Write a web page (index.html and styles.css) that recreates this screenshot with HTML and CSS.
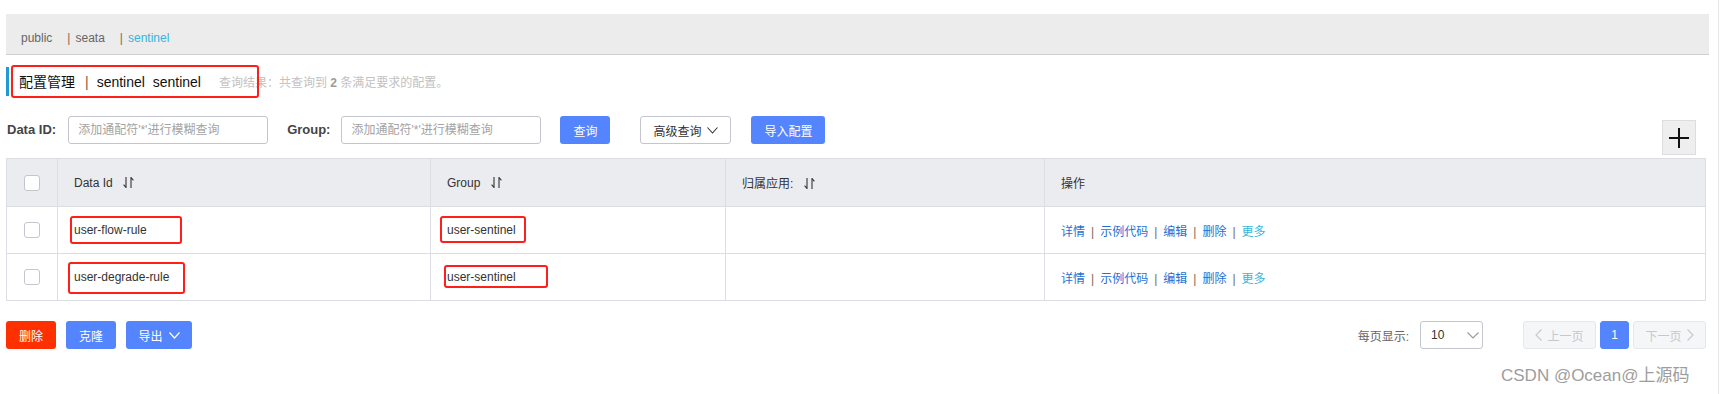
FILE: index.html
```html
<!DOCTYPE html>
<html>

<head>
  <title>配置管理</title>
  <link rel="stylesheet" href="styles.css">
</head>

<body>
  <div class="page">
    <!-- Namespace bar -->
    <div class="ns-bar">
      <span class="ns-item">public</span>
      <span class="ns-sep">|</span><span class="ns-item">seata</span>
      <span class="ns-sep">|</span><span class="ns-item ns-item--active">sentinel</span>
    </div>

    <!-- Page title -->
    <div class="title-row">
      <span class="title-text marked">配置管理<span class="title-sep">|</span>sentinel&nbsp;&nbsp;sentinel<i class="mark mark-title"></i></span>
      <span class="title-note">查询结果：共查询到 <b>2</b> 条满足要求的配置。</span>
    </div>

    <!-- Search row -->
    <div class="search-row">
      <label class="search-label">Data ID:</label>
      <input class="search-input" type="text" placeholder="添加通配符'*'进行模糊查询">
      <label class="search-label search-label--group">Group:</label>
      <input class="search-input" type="text" placeholder="添加通配符'*'进行模糊查询">
      <button class="btn btn-primary btn-query">查询</button>
      <button class="btn btn-normal btn-advanced">高级查询
        <svg class="chev" width="11" height="7" viewBox="0 0 11 7"><path d="M0.5 0.5L5.5 6L10.5 0.5" fill="none" stroke="#333" stroke-width="1.1"/></svg>
      </button>
      <button class="btn btn-primary btn-import">导入配置</button>
      <button class="btn-add">
        <svg width="20" height="20" viewBox="0 0 20 20"><path d="M0 10H20M10 0V20" stroke="#111" stroke-width="2"/></svg>
      </button>
    </div>

    <!-- Config table -->
    <table class="config-table">
      <colgroup>
        <col class="col-check">
        <col class="col-id">
        <col class="col-group">
        <col class="col-app">
        <col>
      </colgroup>
      <thead>
        <tr>
          <th class="cell-check"><span class="checkbox"></span></th>
          <th>Data Id <svg class="sort-icon" width="11" height="11" viewBox="0 0 11 11"><path d="M3 0V10.5L0.6 7.6M8 11V0.5L10.4 3.4" fill="none" stroke="#333" stroke-width="1.1"/></svg></th>
          <th>Group <svg class="sort-icon" width="11" height="11" viewBox="0 0 11 11"><path d="M3 0V10.5L0.6 7.6M8 11V0.5L10.4 3.4" fill="none" stroke="#333" stroke-width="1.1"/></svg></th>
          <th>归属应用: <svg class="sort-icon" width="11" height="11" viewBox="0 0 11 11"><path d="M3 0V10.5L0.6 7.6M8 11V0.5L10.4 3.4" fill="none" stroke="#333" stroke-width="1.1"/></svg></th>
          <th>操作</th>
        </tr>
      </thead>
      <tbody>
        <tr>
          <td class="cell-check"><span class="checkbox"></span></td>
          <td><span class="marked">user-flow-rule<i class="mark mark-r1-id"></i></span></td>
          <td><span class="marked">user-sentinel<i class="mark mark-r1-group"></i></span></td>
          <td></td>
          <td class="ops">
            <a>详情</a><span class="op-sep">|</span><a>示例代码</a><span class="op-sep">|</span><a>编辑</a><span class="op-sep">|</span><a>删除</a><span class="op-sep">|</span><a class="op-more">更多</a>
          </td>
        </tr>
        <tr>
          <td class="cell-check"><span class="checkbox"></span></td>
          <td><span class="marked">user-degrade-rule<i class="mark mark-r2-id"></i></span></td>
          <td><span class="marked">user-sentinel<i class="mark mark-r2-group"></i></span></td>
          <td></td>
          <td class="ops">
            <a>详情</a><span class="op-sep">|</span><a>示例代码</a><span class="op-sep">|</span><a>编辑</a><span class="op-sep">|</span><a>删除</a><span class="op-sep">|</span><a class="op-more">更多</a>
          </td>
        </tr>
      </tbody>
    </table>

    <!-- Footer: batch actions + pagination -->
    <div class="footer-row">
      <button class="btn btn-danger btn-batch">删除</button>
      <button class="btn btn-primary btn-batch">克隆</button>
      <button class="btn btn-primary btn-export">导出
        <svg class="chev" width="11" height="7" viewBox="0 0 11 7"><path d="M0.5 0.5L5.5 6L10.5 0.5" fill="none" stroke="#fff" stroke-width="1.2"/></svg>
      </button>

      <div class="pager">
        <span class="pager-label">每页显示:</span>
        <div class="pager-select">
          <span>10</span>
          <svg width="12" height="7" viewBox="0 0 12 7"><path d="M0.5 0.5L6 6L11.5 0.5" fill="none" stroke="#999" stroke-width="1.1"/></svg>
        </div>
        <button class="page-btn page-btn--disabled page-prev">
          <svg width="7" height="12" viewBox="0 0 7 12"><path d="M6.5 0.5L1 6L6.5 11.5" fill="none" stroke="#c5c8ce" stroke-width="1.1"/></svg>
          上一页
        </button>
        <button class="page-btn page-btn--current">1</button>
        <button class="page-btn page-btn--disabled page-next">
          下一页
          <svg width="7" height="12" viewBox="0 0 7 12"><path d="M0.5 0.5L6 6L0.5 11.5" fill="none" stroke="#c5c8ce" stroke-width="1.1"/></svg>
        </button>
      </div>
    </div>

    <div class="watermark">CSDN @Ocean@上源码</div>
  </div>
</body>

</html>
```

FILE: styles.css
```css
* {
  margin: 0;
  padding: 0;
  box-sizing: border-box;
}

:root {
  --primary: #5584ff;
  --danger: #ff3000;
  --line: #dcdee3;
  --input-border: #c4c6cf;
  --text: #333;
  --link: #1f6fd4;
}

body {
  font-family: 'Liberation Sans', 'Noto Sans CJK SC', sans-serif;
  font-size: 12px;
  color: var(--text);
  background-color: #fff;
}

.page {
  position: relative;
  width: 1719px;
  height: 394px;
  padding: 14px 12px 0 6px;
  border-right: 1px solid #e6e6e6;
}

/* Namespace bar */
.ns-bar {
  display: flex;
  align-items: center;
  height: 41px;
  margin-right: -3px;
  padding: 7px 0 0 15px;
  background-color: #ececec;
  border-bottom: 1px solid #cfcfcf;
  color: #666;
}

.ns-sep {
  margin: 0 5px 0 15px;
  color: #7b6a58;
}

.ns-item--active {
  color: #33b5e0;
}

/* Title */
.title-row {
  display: flex;
  align-items: center;
  height: 29px;
  margin-top: 12px;
  padding-left: 10px;
  border-left: 3px solid #1f9ad6;
}

.title-text {
  font-size: 14px;
  line-height: 20px;
  color: #111;
}

.title-sep {
  margin: 0 8px 0 10px;
  color: #7b5a3a;
}

.title-note {
  margin-left: 18px;
  color: #c2c2c2;
}

.title-note b {
  color: #9a9a9a;
}

/* Red annotation boxes */
.marked {
  position: relative;
  display: inline-block;
  line-height: 14px;
}

.title-text.marked {
  line-height: 20px;
}

.mark {
  position: absolute;
  border: 2px solid #ff1f1a;
  border-radius: 3px;
}

.mark-title {
  left: -8px;
  top: -7px;
  width: 248px;
  height: 33px;
}

.mark-r1-id {
  left: -4px;
  top: -7px;
  width: 112px;
  height: 28px;
}

.mark-r1-group {
  left: -7px;
  top: -7px;
  width: 86px;
  height: 27px;
}

.mark-r2-id {
  left: -6px;
  top: -8px;
  width: 117px;
  height: 32px;
}

.mark-r2-group {
  left: -3px;
  top: -5px;
  width: 104px;
  height: 23px;
}

/* Search row */
.search-row {
  display: flex;
  align-items: flex-start;
  margin-top: 20px;
}

.search-label {
  font-size: 13px;
  font-weight: bold;
  color: #444;
  line-height: 28px;
  margin: 0 12px 0 1px;
}

.search-label--group {
  margin-left: 19px;
  margin-right: 11px;
}

.search-input {
  width: 200px;
  height: 28px;
  padding: 0 9px;
  border: 1px solid var(--input-border);
  border-radius: 3px;
  font-family: inherit;
  font-size: 12px;
  outline: none;
}

.search-input::placeholder {
  color: #a3a3a3;
}

.btn {
  display: inline-flex;
  align-items: center;
  justify-content: center;
  height: 28px;
  border: none;
  border-radius: 3px;
  font-family: inherit;
  font-size: 12px;
  color: #fff;
  cursor: pointer;
}

.btn-primary {
  background-color: var(--primary);
}

.btn-danger {
  background-color: var(--danger);
}

.btn-normal {
  background-color: #fff;
  border: 1px solid var(--input-border);
  color: #333;
}

.btn-query {
  width: 50px;
  margin-left: 19px;
}

.btn-advanced {
  width: 91px;
  margin-left: 30px;
}

.btn-import {
  width: 74px;
  margin-left: 20px;
}

.chev {
  margin-left: 6px;
}

.btn-add {
  display: flex;
  align-items: center;
  justify-content: center;
  width: 34px;
  height: 35px;
  margin: 4px 10px 0 auto;
  background-color: #eee;
  border: 1px solid #ddd;
}

/* Table */
.config-table {
  width: 100%;
  margin-top: 3px;
  border-collapse: collapse;
  border: 1px solid var(--line);
  table-layout: fixed;
}

.col-check {
  width: 51px;
}

.col-id {
  width: 373px;
}

.col-group {
  width: 295px;
}

.col-app {
  width: 319px;
}

.config-table th,
.config-table td {
  border: 1px solid var(--line);
  padding: 0 16px;
  text-align: left;
  font-weight: normal;
  white-space: nowrap;
}

.config-table th {
  height: 48px;
  background-color: #ebecf0;
}

.config-table td {
  height: 47px;
}

.config-table .cell-check {
  padding: 0;
  text-align: center;
}

.checkbox {
  display: inline-block;
  width: 16px;
  height: 16px;
  vertical-align: middle;
  background-color: #fff;
  border: 1px solid var(--input-border);
  border-radius: 3px;
}

.sort-icon {
  margin-left: 7px;
  vertical-align: -1px;
}

.ops a {
  color: var(--link);
}

.ops .op-more {
  color: #35b6dc;
}

.op-sep {
  margin: 0 6px;
  color: #7b6a58;
}

/* Footer */
.footer-row {
  display: flex;
  align-items: center;
  margin-top: 20px;
}

.btn-batch {
  width: 50px;
  margin-right: 10px;
}

.btn-export {
  width: 66px;
}

.pager {
  display: flex;
  align-items: center;
  margin-left: auto;
}

.pager-label {
  color: #666;
  margin-right: 11px;
}

.pager-select {
  display: flex;
  align-items: center;
  justify-content: space-between;
  width: 63px;
  height: 28px;
  padding: 0 3px 0 10px;
  border: 1px solid var(--input-border);
  border-radius: 3px;
  color: #333;
}

.page-btn {
  display: inline-flex;
  align-items: center;
  justify-content: center;
  height: 28px;
  margin-left: 4px;
  border: 1px solid #e6e7eb;
  border-radius: 3px;
  background-color: #f5f6f8;
  font-family: inherit;
  font-size: 12px;
  color: #c5c8ce;
}

.page-prev {
  width: 73px;
  margin-left: 40px;
  gap: 5px;
}

.page-next {
  width: 73px;
  gap: 5px;
}

.page-btn--current {
  width: 29px;
  border-color: var(--primary);
  background-color: var(--primary);
  color: #fff;
}

.watermark {
  position: absolute;
  left: 1501px;
  top: 365px;
  font-size: 17px;
  line-height: 22px;
  color: #9d9d9d;
  text-shadow: 0 0 1px #fff;
}
```
